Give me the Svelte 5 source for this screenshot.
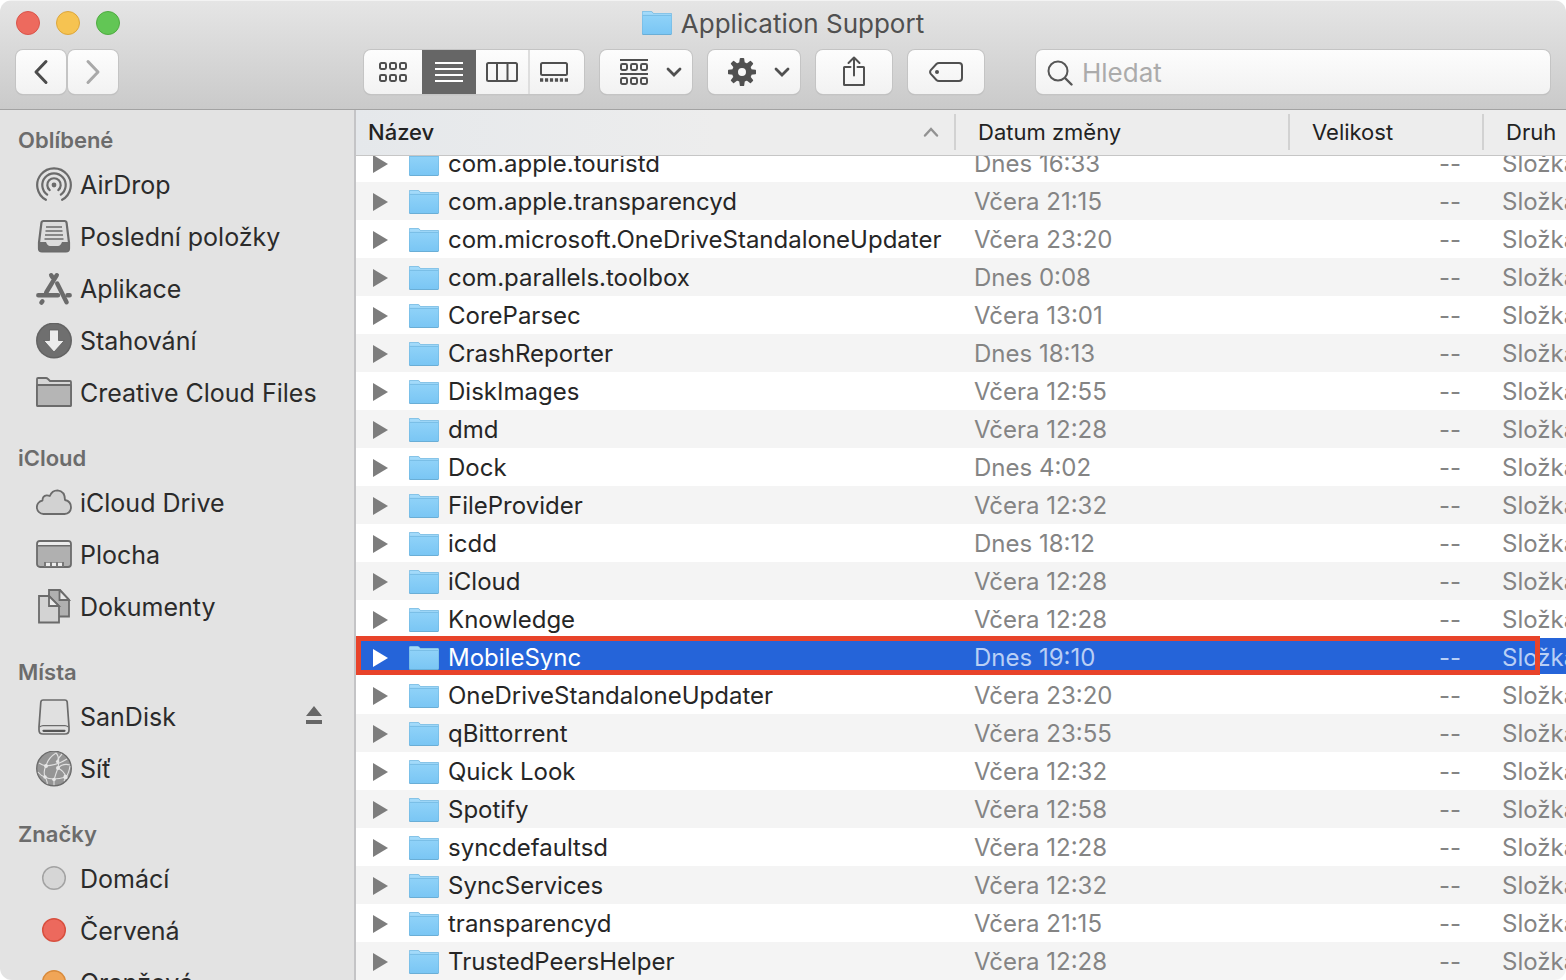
<script>
    import { onMount } from "svelte";

    let list;
    let query = '';
    let view = 'list';
    let selected = 'MobileSync';
    const marked = 'MobileSync';

    const sections = [
        {
            title: 'Oblíbené',
            items: [
                { name: 'AirDrop', icon: 'airdrop' },
                { name: 'Poslední položky', icon: 'recent' },
                { name: 'Aplikace', icon: 'apps' },
                { name: 'Stahování', icon: 'downloads' },
                { name: 'Creative Cloud Files', icon: 'folder' }
            ]
        },
        {
            title: 'iCloud',
            items: [
                { name: 'iCloud Drive', icon: 'cloud' },
                { name: 'Plocha', icon: 'desktop' },
                { name: 'Dokumenty', icon: 'documents' }
            ]
        },
        {
            title: 'Místa',
            items: [
                { name: 'SanDisk', icon: 'disk', eject: true },
                { name: 'Síť', icon: 'network' }
            ]
        },
        {
            title: 'Značky',
            items: [
                { name: 'Domácí', icon: 'tag', color: 'gray' },
                { name: 'Červená', icon: 'tag', color: 'red' },
                { name: 'Oranžová', icon: 'tag', color: 'orange' }
            ]
        }
    ];

    const files = [
        ['com.apple.touristd', 'Dnes 16:33'],
        ['com.apple.transparencyd', 'Včera 21:15'],
        ['com.microsoft.OneDriveStandaloneUpdater', 'Včera 23:20'],
        ['com.parallels.toolbox', 'Dnes 0:08'],
        ['CoreParsec', 'Včera 13:01'],
        ['CrashReporter', 'Dnes 18:13'],
        ['DiskImages', 'Včera 12:55'],
        ['dmd', 'Včera 12:28'],
        ['Dock', 'Dnes 4:02'],
        ['FileProvider', 'Včera 12:32'],
        ['icdd', 'Dnes 18:12'],
        ['iCloud', 'Včera 12:28'],
        ['Knowledge', 'Včera 12:28'],
        ['MobileSync', 'Dnes 19:10'],
        ['OneDriveStandaloneUpdater', 'Včera 23:20'],
        ['qBittorrent', 'Včera 23:55'],
        ['Quick Look', 'Včera 12:32'],
        ['Spotify', 'Včera 12:58'],
        ['syncdefaultsd', 'Včera 12:28'],
        ['SyncServices', 'Včera 12:32'],
        ['transparencyd', 'Včera 21:15'],
        ['TrustedPeersHelper', 'Včera 12:28']
    ];

    onMount(() => {
        list.scrollTop = 12;
    });
</script>

{#snippet blueFolder()}
    <svg class="blue-folder" width="30" height="26" viewBox="0 0 30 26" aria-hidden="true">
        <defs>
            <linearGradient id="folder-front" x1="0" y1="0" x2="0" y2="1">
                <stop offset="0" stop-color="#8fd2f8" />
                <stop offset="1" stop-color="#7ac6f4" />
            </linearGradient>
        </defs>
        <path d="M0 2.2Q0 1 1.2 1H8.6Q9.6 1 10.3 1.8L11.4 3H28.8Q30 3 30 4.2V23.6Q30 25 28.8 25H1.2Q0 25 0 23.8Z" fill="#6aaed6" />
        <path d="M.4 2.4Q.4 1.4 1.4 1.4H8.5Q9.4 1.4 10.1 2.2L11.2 3.4H28.6Q29.6 3.4 29.6 4.4V6H.4Z" fill="#a2dafa" />
        <path d="M.4 5.6H29.6V23.2Q29.6 24 28.7 24H1.3Q.4 24 .4 23.2Z" fill="url(#folder-front)" />
        <path d="M.4 5.4H29.6" stroke="#6fb6e0" stroke-width=".8" />
    </svg>
{/snippet}

{#snippet chevron()}
    <svg width="16" height="10" viewBox="0 0 16 10" aria-hidden="true">
        <path d="M2 2L8 8L14 2" fill="none" stroke="#505050" stroke-width="2.8" stroke-linecap="round" />
    </svg>
{/snippet}

{#snippet boxes(y)}
    {#each [1, 11, 21] as x}
        <rect {x} {y} width="6" height="6" rx="1.4" />
    {/each}
{/snippet}

{#snippet sideIcon(item)}
    <svg class="side-icon" width="36" height="36" viewBox="0 0 36 36" aria-hidden="true">
        {#if item.icon === 'airdrop'}
            <g fill="none" stroke="#6b6b6b" stroke-width="2.2" stroke-linecap="round">
                <path d="M9.9 32.8A16.8 16.8 0 1 1 26.1 32.8" />
                <path d="M11.2 27.6A11.7 11.7 0 1 1 24.8 27.6" />
                <path d="M13.7 23.1A6.7 6.7 0 1 1 22.3 23.1" />
            </g>
            <circle cx="18" cy="18" r="2.4" fill="#6b6b6b" />
        {:else if item.icon === 'recent'}
            <path d="M7.5 2H28.5Q30.3 2 30.6 3.9L33 23.5V29.5Q33 32.500 30 32.500H6Q3 32.500 3 29.500V23.500L5.4 3.9Q5.7 2 7.5 2Z" fill="#dcdcdc" stroke="#6b6b6b" stroke-width="2.2" />
            <path d="M3.5 23H10Q11.5 27 14 27H22Q24.5 27 26 23H32.5V29.5Q32.5 32 30 32H6Q3.5 32 3.5 29.5Z" fill="#6e6e6e" />
            <path d="M10 8H26M9.500 12H26.500M9 16H27M8.500 20H27.500" stroke="#6b6b6b" stroke-width="1.7" />
        {:else if item.icon === 'apps'}
            <g fill="none" stroke="#6b6b6b" stroke-width="4.4" stroke-linecap="round">
                <path d="M2.3 24.2H22M31.5 24.2H33.7" />
                <path d="M20.8 4.2L10.2 21.5M6.4 30.3L5.4 31.6" />
                <path d="M15.2 4.2L16.5 6.2M21.2 12.5L30.6 31.3" />
            </g>
        {:else if item.icon === 'downloads'}
            <circle cx="18" cy="17.500" r="18" fill="#636363" />
            <circle cx="18" cy="17.500" r="16.500" fill="#6f6f6f" />
            <path d="M13.5 7H22.500V17.500H28.300L18 29L7.700 17.500H13.500Z" fill="#ececec" stroke="#5c5c5c" stroke-width=".8" />
        {:else if item.icon === 'folder'}
            <path d="M1 30V4Q1 3 2 3H10Q11 3 12 4L14 6H34Q35 6 35 7V30Q35 31 34 31H2Q1 31 1 30Z" fill="#d6d6d6" stroke="#6b6b6b" stroke-width="1.8" />
            <path d="M1 11Q1 10 2 10H34Q35 10 35 11V30Q35 31 34 31H2Q1 31 1 30Z" fill="#b5b5b5" stroke="#6b6b6b" stroke-width="1.8" />
        {:else if item.icon === 'cloud'}
            <path d="M7.500 29A6.800 6.800 0 0 1 6.500 15.500Q6.400 10.800 10.600 10.300Q12.400 10.200 13.800 11Q16 5.300 21.500 5.300Q29 6 29 15Q35 16.300 35 22.300Q34.800 28.500 28.500 29Z" fill="#d2d2d2" stroke="#6b6b6b" stroke-width="1.8" stroke-linejoin="round" />
        {:else if item.icon === 'desktop'}
            <rect x="1" y="4" width="34" height="26" rx="3" fill="#b0b0b0" stroke="#6b6b6b" stroke-width="1.8" />
            <path d="M2 8V6.500Q2 5 3.800 5H32.200Q34 5 34 6.500V8Z" fill="#ececec" />
            <path d="M1.500 8.700H34.500" stroke="#6b6b6b" stroke-width="1.4" />
            <path d="M8 30V25H28V30Z" fill="#777" />
            <path d="M10 25.800H14V29H10ZM16 25.800H20V29H16ZM22 25.800H26V29H22Z" fill="#ededed" />
        {:else if item.icon === 'documents'}
            <g stroke="#6b6b6b" stroke-width="1.8">
                <path d="M13 1H24L33 10.500V27.500H13Z" fill="#b0b0b0" />
                <path d="M23.500 1V11H33Z" fill="#e8e8e8" />
                <path d="M3 7H13L23 17V33.500H3Z" fill="#d3d3d3" />
                <path d="M13 7V17H23Z" fill="#ececec" />
            </g>
        {:else if item.icon === 'disk'}
            <path d="M7.2 1H28.8Q31 1 31.2 3.2L33 28V31Q33 35 29 35H7Q3 35 3 31V28L4.8 3.2Q5 1 7.2 1Z" fill="#e0e0e0" stroke="#6b6b6b" stroke-width="1.7" />
            <path d="M3.4 28Q5.5 26.6 7 26.6H29Q30.5 26.6 32.6 28" fill="none" stroke="#6b6b6b" stroke-width="1.2" />
            <path d="M7.5 31.8H28.5" stroke="#555" stroke-width="2.2" stroke-linecap="round" />
        {:else if item.icon === 'network'}
            <circle cx="18" cy="17.500" r="17.300" fill="#959595" stroke="#6a6a6a" stroke-width="1.3" />
            <g fill="none" stroke="#e0e0e0" stroke-width="1.1">
                <path d="M3 12Q6 14 10 15Q22 14 31 8" />
                <path d="M10 15Q12 7 20 2M10 15Q7 20 9 26Q12 31 11 33" />
                <path d="M20 2Q24 6 22 17Q20 22 18 29Q18 32 18 34" />
                <path d="M26 3Q22 7 21 11M22 17Q28 20 30 26Q33 22 34 15" />
                <path d="M2 21Q5 25 9 26Q16 30 30 26L28 30M22 17Q27 12 34 14" />
            </g>
            <g fill="#e6e6e6">
                <circle cx="10" cy="15" r="2" />
                <circle cx="22" cy="17" r="2" />
                <circle cx="21.500" cy="10.500" r="1.600" />
                <circle cx="9" cy="26" r="1.800" />
                <circle cx="18" cy="28.500" r="1.800" />
                <circle cx="29.500" cy="26" r="2.200" />
            </g>
        {:else}
            <circle class="tag-{item.color}" cx="18" cy="17" r="11.3" stroke-width="1.5" />
        {/if}
    </svg>
{/snippet}

<div class="window">
    <header>
        <div class="title">
            <div class="lights">
                <button class="light close" aria-label="Zavřít"></button>
                <button class="light minimize" aria-label="Minimalizovat"></button>
                <button class="light zoom" aria-label="Zvětšit"></button>
            </div>
            <h1>{@render blueFolder()}Application Support</h1>
        </div>
        <div class="toolbar">
            <div class="nav">
                <button class="btn arrow" aria-label="Zpět">
                    <svg width="16" height="26" viewBox="0 0 16 26"><path d="M13 2.500L3 13L13 23.500" fill="none" stroke="#4c4c4c" stroke-width="3" stroke-linecap="round" stroke-linejoin="round" /></svg>
                </button>
                <button class="btn arrow" aria-label="Vpřed">
                    <svg width="16" height="26" viewBox="0 0 16 26"><path d="M3 2.500L13 13L3 23.500" fill="none" stroke="#a9a9a9" stroke-width="3" stroke-linecap="round" stroke-linejoin="round" /></svg>
                </button>
            </div>
            <div class="tools">
                <div class="views">
                    <button class:active={view === 'icons'} aria-label="Ikony" on:click={() => view = 'icons'}>
                        <svg width="28" height="20" viewBox="0 0 28 20"><g fill="none" stroke="currentColor" stroke-width="2">{@render boxes(1)}{@render boxes(13)}</g></svg>
                    </button>
                    <button class:active={view === 'list'} aria-label="Seznam" on:click={() => view = 'list'}>
                        <svg width="28" height="20" viewBox="0 0 28 20"><path d="M0 1H28M0 7H28M0 13H28M0 19H28" stroke="currentColor" stroke-width="2" /></svg>
                    </button>
                    <button class="divided" class:active={view === 'columns'} aria-label="Sloupce" on:click={() => view = 'columns'}>
                        <svg width="32" height="20" viewBox="0 0 32 20"><rect x="1" y="1" width="30" height="18" rx="1.500" fill="none" stroke="currentColor" stroke-width="2" /><path d="M11 1V19M21.500 1V19" stroke="currentColor" stroke-width="2" /></svg>
                    </button>
                    <button class="last" class:active={view === 'gallery'} aria-label="Galerie" on:click={() => view = 'gallery'}>
                        <svg width="28" height="20" viewBox="0 0 28 20"><rect x="1" y="1" width="26" height="12" rx="1.500" fill="none" stroke="currentColor" stroke-width="2" /><path d="M0 18H28" stroke="currentColor" stroke-width="3.6" stroke-dasharray="3.2 1.76" /></svg>
                    </button>
                </div>
                <button class="btn menu" aria-label="Uspořádat">
                    <svg width="28" height="26" viewBox="0 0 28 26"><g fill="none" stroke="#505050" stroke-width="2"><path d="M0 1H28M0 15H28" />{@render boxes(5)}{@render boxes(19)}</g></svg>
                    {@render chevron()}
                </button>
                <button class="btn menu" aria-label="Akce">
                    <svg width="28" height="28" viewBox="0 0 28 28">
                        <circle cx="14" cy="14" r="7" fill="none" stroke="#505050" stroke-width="6" />
                        {#each [0, 45, 90, 135, 180, 225, 270, 315] as turn}
                            <path d="M11.200 5L11.800 .5Q12 0 12.600 0H15.400Q16 0 16.200 .5L16.800 5Z" fill="#505050" transform="rotate({turn} 14 14)" />
                        {/each}
                    </svg>
                    {@render chevron()}
                </button>
                <button class="btn single" aria-label="Sdílet">
                    <svg width="24" height="32" viewBox="0 0 24 32"><g fill="none" stroke="#505050" stroke-width="2" stroke-linecap="round" stroke-linejoin="round"><path d="M8.500 11H2.500Q2 11 2 11.500V28.500Q2 29 2.500 29H21.500Q22 29 22 28.500V11.500Q22 11 21.500 11H15.500" /><path d="M12 19.500V1.500M6.500 7L12 1.500L17.500 7" /></g></svg>
                </button>
                <button class="btn single" aria-label="Značky">
                    <svg width="34" height="20" viewBox="0 0 34 20"><path d="M10 1H30Q33 1 33 4V16Q33 19 30 19H10Q8.500 19 7.400 18L1.800 11.800Q.4 10 1.800 8.200L7.400 2Q8.500 1 10 1Z" fill="none" stroke="#505050" stroke-width="2" /><circle cx="8" cy="10" r="2" fill="#505050" /></svg>
                </button>
            </div>
            <label class="search">
                <svg width="26" height="26" viewBox="0 0 26 26" aria-hidden="true"><circle cx="11" cy="11" r="9.500" fill="none" stroke="#565656" stroke-width="2" /><path d="M18 18L24.500 24.500" stroke="#565656" stroke-width="2.400" stroke-linecap="round" /></svg>
                <input type="search" bind:value={query} placeholder="Hledat" aria-label="Hledat" />
            </label>
        </div>
    </header>

    <div class="content">
        <aside>
            {#each sections as section}
                <section>
                    <h2>{section.title}</h2>
                    <ul>
                        {#each section.items as item}
                            <li>
                                <a href="#{item.icon}">{@render sideIcon(item)}{item.name}</a>
                                {#if item.eject}
                                    <button class="eject" aria-label="Vysunout">
                                        <svg width="16" height="18" viewBox="0 0 16 18"><path d="M8 0L16 10H0ZM0 14H16V18H0Z" fill="#666" /></svg>
                                    </button>
                                {/if}
                            </li>
                        {/each}
                    </ul>
                </section>
            {/each}
        </aside>

        <main bind:this={list}>
            <table>
                <colgroup>
                    <col class="col-name" />
                    <col class="col-date" />
                    <col class="col-size" />
                    <col />
                </colgroup>
                <thead>
                    <tr>
                        <th class="sorted">
                            <div>
                                Název
                                <svg width="16" height="10" viewBox="0 0 16 10" aria-hidden="true"><path d="M2 8.500L8 2L14 8.500" fill="none" stroke="#929292" stroke-width="2.400" stroke-linecap="round" /></svg>
                            </div>
                        </th>
                        <th><div>Datum změny</div></th>
                        <th><div>Velikost</div></th>
                        <th><div>Druh</div></th>
                    </tr>
                </thead>
                <tbody>
                    {#each files as [name, date]}
                        <tr class:selected={name === selected} on:click={() => selected = name}>
                            <td class="name">
                                <div>
                                    <button class="disclosure" aria-label="Rozbalit {name}">
                                        <svg width="15" height="18" viewBox="0 0 15 18"><path d="M0 0L15 9L0 18Z" fill="currentColor" /></svg>
                                    </button>
                                    {@render blueFolder()}
                                    <span>{name}</span>
                                </div>
                                {#if name === marked}
                                    <i class="mark"></i>
                                {/if}
                            </td>
                            <td>{date}</td>
                            <td class="size">--</td>
                            <td class="kind">Složka</td>
                        </tr>
                    {/each}
                </tbody>
            </table>
        </main>
    </div>
</div>

<style>
    :global(body) {
        background: #fff;
    }
    .window {
        display: flex;
        flex-direction: column;
        height: 100vh;
        overflow: hidden;
        border-radius: 12px;
        font-family: 'Inter', 'Liberation Sans', sans-serif;
        color: #262626;
    }
    svg {
        display: block;
        flex: none;
    }
    button {
        padding: 0;
        border: none;
        background: none;
        font: inherit;
    }
    header {
        flex: none;
        box-sizing: border-box;
        height: 110px;
        background: linear-gradient(#e5e5e5, #cacaca);
        border-top: 1px solid #f3f3f3;
        border-bottom: 1px solid #a3a3a3;
    }
    .title {
        display: grid;
        grid-template-columns: 1fr auto 1fr;
        align-items: center;
        height: 44px;
        padding: 0 16px;
    }
    .lights {
        display: flex;
        gap: 16px;
    }
    .light {
        width: 24px;
        height: 24px;
        border-radius: 50%;
    }
    .close {
        background: #ed6a5e;
        border: 1px solid #d9544a;
    }
    .minimize {
        background: #f6c351;
        border: 1px solid #dca63c;
    }
    .zoom {
        background: #62c655;
        border: 1px solid #4fab41;
    }
    h1 {
        display: flex;
        align-items: center;
        gap: 9px;
        margin: 0;
        font-size: 26px;
        font-weight: 400;
        color: #505050;
    }
    .toolbar {
        display: flex;
        padding: 5px 16px 0;
    }
    .nav {
        display: flex;
        gap: 2px;
        width: 348px;
    }
    .tools {
        display: flex;
        gap: 16px;
        margin-right: 52px;
    }
    .btn, .views, .search {
        display: flex;
        align-items: center;
        box-sizing: border-box;
        height: 44px;
        border-radius: 7px;
        background: linear-gradient(#fdfdfd, #f2f2f2);
        box-shadow: 0 0 0 1px #c4c4c4, 0 1px 1px #a8a8a8;
    }
    .arrow {
        justify-content: center;
        width: 50px;
    }
    .views {
        overflow: hidden;
    }
    .views button {
        display: flex;
        align-items: center;
        justify-content: center;
        box-sizing: border-box;
        width: 54px;
        height: 44px;
        color: #505050;
    }
    .views button:first-child {
        width: 58px;
    }
    .views .divided {
        border-right: 2px solid #dedede;
    }
    .views .last {
        padding-right: 6px;
    }
    .views .active {
        background: #666;
        color: #fff;
    }
    .menu {
        justify-content: space-between;
        width: 92px;
        padding: 0 10px 0 20px;
    }
    .single {
        justify-content: center;
        width: 76px;
    }
    .search {
        flex: 1;
        gap: 9px;
        padding: 1px 11px 0;
    }
    .search input {
        flex: 1;
        min-width: 0;
        padding: 0;
        border: none;
        outline: none;
        background: none;
        font: inherit;
        font-size: 26px;
    }
    .search input::placeholder {
        color: #ababab;
    }
    .content {
        display: flex;
        flex: 1;
        min-height: 0;
    }
    aside {
        flex: none;
        box-sizing: border-box;
        width: 356px;
        padding-top: 11px;
        overflow: hidden;
        background: #e3e3e3;
        border-right: 2px solid #c4c4c6;
    }
    section {
        margin-bottom: 20px;
    }
    h2 {
        margin: 0;
        padding-left: 18px;
        font-size: 22px;
        line-height: 38px;
        font-weight: 600;
        color: #6c6c6c;
    }
    ul {
        margin: 0;
        padding: 0;
        list-style: none;
    }
    li {
        display: flex;
        align-items: center;
        padding: 0 32px 0 36px;
    }
    li a {
        display: flex;
        flex: 1;
        align-items: center;
        gap: 8px;
        height: 52px;
        font-size: 25px;
        white-space: nowrap;
        color: #2b2b2b;
        text-decoration: none;
    }
    .eject {
        padding-bottom: 4px;
    }
    .tag-gray {
        fill: #d6d6d6;
        stroke: #a3a3a3;
    }
    .tag-red {
        fill: #ec695d;
        stroke: #d8503f;
    }
    .tag-orange {
        fill: #f0a557;
        stroke: #d98b3c;
    }
    main {
        flex: 1;
        min-width: 0;
        overflow: auto;
        scrollbar-width: none;
        background: #fff;
    }
    table {
        width: 100%;
        table-layout: fixed;
        border-collapse: separate;
        border-spacing: 0;
        font-size: 24px;
    }
    .col-name {
        width: 600px;
    }
    .col-date {
        width: 334px;
    }
    .col-size {
        width: 194px;
    }
    thead {
        position: sticky;
        top: 0;
        z-index: 1;
    }
    th {
        box-sizing: border-box;
        height: 46px;
        padding: 0 0 2px;
        background: #ededed;
        border-bottom: 1px solid #c6c6c6;
        font-size: 22px;
        font-weight: 400;
        text-align: left;
        color: #222;
    }
    th div {
        display: flex;
        align-items: center;
        justify-content: space-between;
        height: 36px;
        padding: 0 15px 0 22px;
        border-right: 2px solid #d2d2d2;
        white-space: nowrap;
    }
    th:last-child div {
        border-right: none;
    }
    .sorted {
        background: linear-gradient(to right, #e5e8eb, #ededed 60%);
        font-weight: 500;
    }
    .sorted div {
        padding-left: 12px;
    }
    tbody tr {
        position: relative;
    }
    tbody tr:nth-child(even) {
        background: #f4f4f4;
    }
    td {
        box-sizing: border-box;
        height: 38px;
        padding: 2px 0 0 18px;
        overflow: hidden;
        line-height: 28px;
        white-space: nowrap;
        color: #848484;
    }
    .name {
        padding-left: 17px;
        color: #262626;
    }
    .name div {
        display: flex;
        align-items: center;
    }
    .name span {
        margin-left: 9px;
    }
    .disclosure {
        margin-right: 21px;
        color: #7d7d7d;
    }
    .size {
        padding-right: 23px;
        text-align: right;
    }
    tbody tr.selected {
        background: #2564d9;
        box-shadow: inset 0 -2px #fff;
    }
    .selected td {
        color: #b9cff5;
    }
    .selected .name, .selected .disclosure {
        color: #fff;
    }
    /* callout frame drawn over the row */
    .mark {
        position: absolute;
        top: -2px;
        left: 0;
        right: 26px;
        bottom: 1px;
        border: 5px solid #e8432a;
    }
</style>
